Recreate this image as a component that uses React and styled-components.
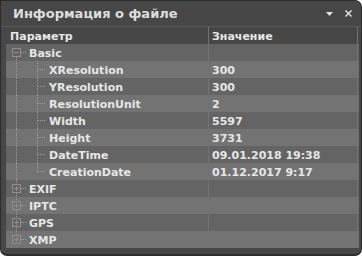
import React from 'react';
import styled, { createGlobalStyle } from 'styled-components';

const GlobalStyle = createGlobalStyle`
  html, body {
    margin: 0;
    padding: 0;
    background: #ffffff;
  }
  * {
    box-sizing: border-box;
  }
`;

const Panel = styled.div`
  width: 362px;
  height: 256px;
  background: #474747;
  border: 1px solid #2c2c2c;
  border-bottom-width: 2px;
  border-radius: 0 7px 7px 7px;
  display: flex;
  flex-direction: column;
  overflow: hidden;
  font-family: 'DejaVu Sans', 'Liberation Sans', sans-serif;
  color: #e6e6e6;
`;

const TitleBar = styled.div`
  height: 26px;
  display: flex;
  align-items: center;
  padding: 0 9px 0 12px;
  border-bottom: 1px solid #585858;
`;

const Title = styled.h1`
  margin: 0;
  flex: 1;
  font-size: 13px;
  font-weight: 700;
  color: #dedede;
`;

const TitleButtons = styled.div`
  display: flex;
  align-items: center;
  gap: 12px;
`;

const Body = styled.div`
  padding: 0 2px 0 5px;
  display: flex;
  flex-direction: column;
`;

const Row = styled.div`
  display: grid;
  grid-template-columns: 203px 149px;
  height: 17px;
  background: ${(p) =>
    p.$header ? 'transparent' : p.$odd ? '#737373' : '#646464'};
`;

const Cell = styled.div`
  display: flex;
  align-items: center;
  border-right: 1px solid #727272;
  padding-left: ${(p) => p.$pad ?? 3}px;
  padding-top: 1px;
  font-size: 11px;
  font-weight: 700;
  white-space: nowrap;
  overflow: hidden;
`;

const Gutter = styled.svg`
  flex: none;
  display: block;
  margin-top: -1px;
`;

const DOT = '#9c9c9c';

function Tree({ kind, first, last, lastChild, open }) {
  const w = kind === 'child' ? 43 : 23;
  return (
    <Gutter width={w} height="17" viewBox={`0 0 ${w} 17`}>
      <g stroke={DOT} strokeWidth="1" strokeDasharray="1 1" fill="none" shapeRendering="crispEdges">
        {kind === 'child' && <line x1="10.5" y1="0" x2="10.5" y2="17" />}
        {kind === 'child' && <line x1="31.5" y1="0" x2="31.5" y2={lastChild ? 9 : 17} />}
        {kind === 'child' && <line x1="32" y1="8.5" x2="39" y2="8.5" />}
        {kind === 'root' && !first && <line x1="10.5" y1="0" x2="10.5" y2="4" />}
        {kind === 'root' && !last && <line x1="10.5" y1="13" x2="10.5" y2="17" />}
        {kind === 'root' && <line x1="15" y1="8.5" x2="21" y2="8.5" />}
      </g>
      {kind === 'root' && (
        <g stroke="#8e8e8e" fill="none" shapeRendering="crispEdges">
          <rect x="6.5" y="4.5" width="8" height="8" />
          <line x1="8" y1="8.5" x2="13" y2="8.5" />
          {!open && <line x1="10.5" y1="6" x2="10.5" y2="11" />}
        </g>
      )}
    </Gutter>
  );
}

const rows = [
  { name: 'Basic', kind: 'root', open: true, first: true },
  { name: 'XResolution', value: '300', kind: 'child' },
  { name: 'YResolution', value: '300', kind: 'child' },
  { name: 'ResolutionUnit', value: '2', kind: 'child' },
  { name: 'Width', value: '5597', kind: 'child' },
  { name: 'Height', value: '3731', kind: 'child' },
  { name: 'DateTime', value: '09.01.2018 19:38', kind: 'child' },
  { name: 'CreationDate', value: '01.12.2017 9:17', kind: 'child', lastChild: true },
  { name: 'EXIF', kind: 'root' },
  { name: 'IPTC', kind: 'root' },
  { name: 'GPS', kind: 'root' },
  { name: 'XMP', kind: 'root', last: true },
];

export default function App() {
  return (
    <>
      <GlobalStyle />
      <Panel>
        <TitleBar>
          <Title>Информация о файле</Title>
          <TitleButtons>
            <svg width="7" height="4" viewBox="0 0 7 4">
              <path d="M0 0H7L3.5 4Z" fill="#e6e6e6" />
            </svg>
            <svg width="7" height="7" viewBox="0 0 7 7">
              <path d="M0.5 0.5L6.5 6.5M6.5 0.5L0.5 6.5" stroke="#e6e6e6" strokeWidth="1.4" />
            </svg>
          </TitleButtons>
        </TitleBar>
        <Body>
          <Row $header>
            <Cell $pad={4}>Параметр</Cell>
            <Cell $pad={3}>Значение</Cell>
          </Row>
          {rows.map((r, i) => (
            <Row key={r.name} $odd={i % 2 === 1}>
              <Cell $pad={0}>
                <Tree {...r} />
                {r.name}
              </Cell>
              <Cell $pad={3}>{r.value}</Cell>
            </Row>
          ))}
        </Body>
      </Panel>
    </>
  );
}
